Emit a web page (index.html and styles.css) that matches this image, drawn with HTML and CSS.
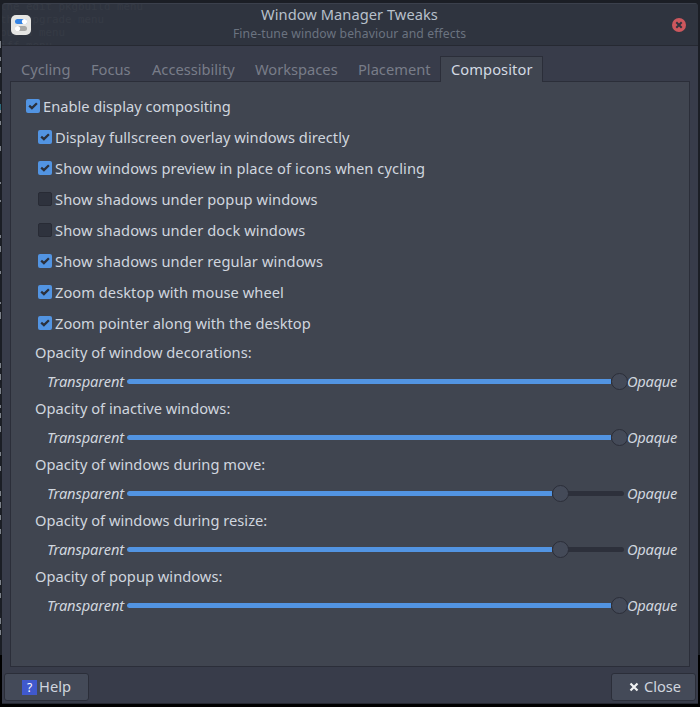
FILE: index.html
```html
<!DOCTYPE html>
<html lang="en">
<head>
<meta charset="utf-8">
<title>Window Manager Tweaks</title>
<link rel="stylesheet" href="styles.css">
</head>
<body>
<svg width="0" height="0" class="defs"><symbol id="tick" viewBox="0 0 14 14"><path d="M3.2 6.6 5.9 9.1 10.9 4.2" fill="none" stroke="#2b303b" stroke-width="2.3"/></symbol></svg>
<svg class="edge" width="2" height="707"><path d="M.5 41v7M.5 57v4M.5 67v6M.5 91v3M.5 110v3M.5 121v4M.5 146v5M.5 182v2M.5 200v2M.5 235v3M.5 246v6M.5 271v3M.5 302v2M.5 312v7M.5 363v5M.5 374v6M.5 388v6M.5 405v3M.5 413v5M.5 426v6M.5 452v4M.5 466v5M.5 491v5M.5 502v6M.5 515v5M.5 529v5M.5 580v5M.5 593v5M.5 618v6M.5 630v5" stroke="#7d828a"/><path d="M.5 104v6" stroke="#2d6a7c"/></svg>
<main class="window">
  <header class="titlebar">
    <pre class="ghost" aria-hidden="true">the edit pkgbuild menu
the upgrade menu
build menu
iff menu</pre>
    <svg class="app-icon" viewBox="0 0 20 20"><rect width="20" height="20" rx="5" fill="#e6e6e4"/><rect x="4" y="4" width="12" height="5" rx="2.5" fill="#3584e4"/><circle cx="13.5" cy="6.5" r="2.6" fill="#fff"/><rect x="4" y="11" width="12" height="5" rx="2.5" fill="#a9a9a7"/><circle cx="6.5" cy="13.5" r="2.6" fill="#fff"/></svg>
    <div class="titles"><h1>Window Manager Tweaks</h1><p>Fine-tune window behaviour and effects</p></div>
    <svg class="close-icon" viewBox="0 0 14 14"><circle cx="7" cy="7" r="7" fill="#cc575d"/><path d="M4.3 4.3 9.7 9.7M9.7 4.3 4.3 9.7" stroke="#2f343f" stroke-width="2"/></svg>
  </header>
  <nav class="tabs"><span class="tab cycling">Cycling</span><span class="tab focus">Focus</span><span class="tab accessibility">Accessibility</span><span class="tab workspaces">Workspaces</span><span class="tab placement">Placement</span><span class="tab active">Compositor</span></nav>
  <section class="panel">
    <label class="check root"><i class="box on"><svg><use href="#tick"/></svg></i>Enable display compositing</label>
    <label class="check snug"><i class="box on"><svg><use href="#tick"/></svg></i>Display fullscreen overlay windows directly</label>
    <label class="check wide"><i class="box on"><svg><use href="#tick"/></svg></i>Show windows preview in place of icons when cycling</label>
    <label class="check wide"><i class="box"></i>Show shadows under popup windows</label>
    <label class="check wide"><i class="box"></i>Show shadows under dock windows</label>
    <label class="check wide"><i class="box on"><svg><use href="#tick"/></svg></i>Show shadows under regular windows</label>
    <label class="check snug"><i class="box on"><svg><use href="#tick"/></svg></i>Zoom desktop with mouse wheel</label>
    <label class="check"><i class="box on"><svg><use href="#tick"/></svg></i>Zoom pointer along with the desktop</label>
    <div class="scales">
      <div class="label">Opacity of window decorations:</div>
      <div class="scale"><em>Transparent</em><div class="track"><div class="fill"></div><b class="knob"></b></div><em class="end">Opaque</em></div>
      <div class="label">Opacity of inactive windows:</div>
      <div class="scale"><em>Transparent</em><div class="track"><div class="fill"></div><b class="knob"></b></div><em class="end">Opaque</em></div>
      <div class="label">Opacity of windows during move:</div>
      <div class="scale"><em>Transparent</em><div class="track partial"><div class="fill"></div><b class="knob"></b></div><em class="end">Opaque</em></div>
      <div class="label">Opacity of windows during resize:</div>
      <div class="scale"><em>Transparent</em><div class="track partial"><div class="fill"></div><b class="knob"></b></div><em class="end">Opaque</em></div>
      <div class="label">Opacity of popup windows:</div>
      <div class="scale"><em>Transparent</em><div class="track"><div class="fill"></div><b class="knob"></b></div><em class="end">Opaque</em></div>
    </div>
  </section>
  <footer class="actions">
    <button class="btn"><span class="help-icon">?</span>Help</button>
    <button class="btn close"><svg viewBox="0 0 10 10"><path d="M1.5 1.5 8.5 8.5M8.5 1.5 1.5 8.5" stroke="#f0f1f2" stroke-width="2.2"/></svg>Close</button>
  </footer>
</main>
</body>
</html>
```
FILE: styles.css
```css
* { box-sizing: border-box; }
body {
  margin: 0;
  width: 700px;
  height: 707px;
  padding: 3px 2px 4px;
  overflow: hidden;
  background: linear-gradient(#1b1e25 0 655px, #000 655px);
  font: 14.667px/20px "Noto Sans", sans-serif;
  color: #d0d6df;
}
.defs { position: absolute; }
.edge { position: absolute; left: 0; top: 0; }
.window {
  width: 696px;
  height: 701px;
  display: flex;
  flex-direction: column;
  background: #383c4a;
  border-bottom: 1px solid #262932;
  border-radius: 4px 4px 0 0;
  overflow: hidden;
}
.titlebar {
  position: relative;
  height: 43px;
  flex: none;
  display: flex;
  align-items: center;
  justify-content: space-between;
  padding: 0 12px 0 9px;
  background: #2f343f;
  border-top: 1px solid #3b404c;
  border-bottom: 1px solid #262932;
  overflow: hidden;
}
.ghost {
  position: absolute;
  left: -2px;
  top: -4px;
  margin: 0;
  font: 10.8px/13px "DejaVu Sans Mono", monospace;
  color: #363b45;
}
.app-icon { position: relative; width: 20px; height: 20px; }
.close-icon { width: 14px; height: 14px; }
.titles { text-align: center; margin: -1px 4px 0 0; }
.titles h1 { margin: 0; font-size: 14.667px; font-weight: 400; line-height: 19px; letter-spacing: .04px; color: #b8c0cb; }
.titles p { margin: 0; font-size: 12.2px; line-height: 20px; letter-spacing: .1px; color: #6b7380; }
.tabs { height: 36px; flex: none; display: flex; padding: 10px 8px 0; position: relative; z-index: 1; margin-bottom: -1px; }
.tab { height: 26px; padding: 3px 0 0 11px; color: #787d89; white-space: nowrap; }
.cycling { width: 70px; }
.focus { width: 61px; }
.accessibility { width: 103px; }
.workspaces { width: 103px; }
.placement { width: 93px; }
.tab.active { width: 103px; background: #404550; border: 1px solid #2b2e39; border-bottom: 0; padding: 2px 0 0 10px; letter-spacing: .08px; color: #d3dae3; }
.panel {
  height: 586px;
  flex: none;
  margin: 0 8px;
  padding: 9px 12px 0 15px;
  background: #404550;
  border: 1px solid #2b2e39;
}
.check { display: flex; height: 31px; align-items: center; margin-left: 12px; padding-bottom: 2px; white-space: nowrap; }
.check.root { margin-left: 0; }
.check.snug { letter-spacing: .035px; }
.check.wide { letter-spacing: .09px; }
.box { width: 14px; height: 14px; margin: 0 3px 0 0; border-radius: 2px; background: #2e323d; border: 1px solid #282b35; }
.box.on { background: #5294e2; border: 0; }
.box svg { display: block; width: 14px; height: 14px; }
.scales { padding-left: 9px; }
.label { height: 28px; line-height: 26px; letter-spacing: .015px; }
.scale { height: 28px; display: flex; align-items: center; padding-left: 12px; }
.scale em { width: 80px; flex: none; letter-spacing: -.12px; }
.scale .end { width: 50px; letter-spacing: -.25px; }
.track { width: 497px; height: 5px; flex: none; border-radius: 3px; background: #2d303b; margin-right: 3px; display: flex; align-items: center; }
.fill { width: 484px; height: 5px; flex: none; border-radius: 3px 0 0 3px; background: #5294e2; }
.partial .fill { width: 425px; }
.knob { width: 17px; height: 17px; flex: none; border-radius: 50%; background: #444a58; border: 1px solid #2b2e39; }
.actions { display: flex; justify-content: space-between; padding: 6px 2px 0; }
.btn { width: 85px; height: 28px; padding: 0 0 2px; display: flex; align-items: center; justify-content: center; font: inherit; color: #d0d6df; background: #444a58; border: 1px solid #2b2e39; border-radius: 3px; }
.help-icon { width: 15px; height: 15px; margin: 2px 2px 0 0; background: #4059cd; color: #fff; font-size: 12px; line-height: 15px; }
.btn svg { width: 10px; height: 10px; margin: 2px 5px 0 3px; }
```
